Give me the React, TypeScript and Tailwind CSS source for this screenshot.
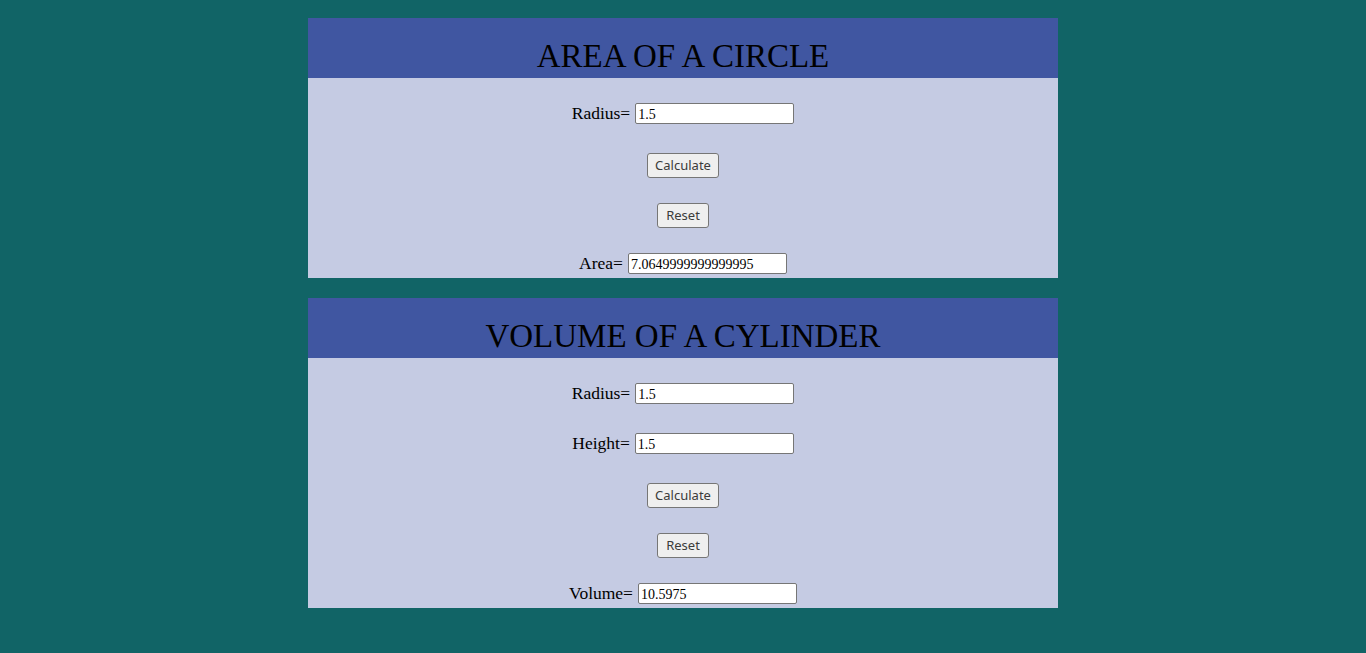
import React, { useState } from "react";

const serif = "font-['Liberation_Serif',Georgia,serif]";

function Field({ label, value, onChange }: { label: string; value: string; onChange?: (v: string) => void }) {
    return (
        <div className="h-[50px] flex justify-center items-start">
            <div className="flex items-start">
                <span className={`${serif} text-[17.5px] leading-[21px] text-black mr-[5px]`}>{label}</span>
                <input
                    value={value}
                    onChange={(e) => onChange && onChange(e.target.value)}
                    className={`${serif} text-[14px] w-[159px] h-[21px] bg-white border border-[#767676] rounded-[2px] px-[2px] pt-[1px] text-black outline-none`}
                />
            </div>
        </div>
    );
}

function Btn({ children, w, onClick }: { children: React.ReactNode; w: string; onClick?: () => void }) {
    return (
        <div className="h-[50px] flex justify-center items-start">
            <button
                onClick={onClick}
                className={`${w} h-[25px] bg-[#efefef] border border-[#767676] rounded-[3px] text-[13px] text-[#3b3b3b] font-['Noto_Sans',sans-serif] leading-none`}
            >
                {children}
            </button>
        </div>
    );
}

function Card({ title, children }: { title: string; children: React.ReactNode }) {
    return (
        <div className="w-[750px] mx-auto">
            <div className="h-[60px] bg-[#4056a1] pt-[22px]">
                <h1 className={`${serif} text-[33px] leading-[32px] text-black text-center`}>{title}</h1>
            </div>
            <div className="bg-[#c5cbe3] pt-[25px] flex flex-col">{children}</div>
        </div>
    );
}

export default function App() {
    const [r1, setR1] = useState("1.5");
    const [area, setArea] = useState("7.0649999999999995");
    const [r2, setR2] = useState("1.5");
    const [h2, setH2] = useState("1.5");
    const [vol, setVol] = useState("10.5975");

    return (
        <div className="min-h-[653px] bg-[#116466] pt-[18px] flex flex-col gap-[20px]">
            <Card title="AREA OF A CIRCLE">
                <Field label="Radius=" value={r1} onChange={setR1} />
                <Btn w="w-[72px]" onClick={() => setArea(String(3.14 * Number(r1) * Number(r1)))}>Calculate</Btn>
                <Btn w="w-[52px]" onClick={() => { setR1(""); setArea(""); }}>Reset</Btn>
                <div className="h-[25px]">
                    <Field label="Area=" value={area} />
                </div>
            </Card>
            <Card title="VOLUME OF A CYLINDER">
                <Field label="Radius=" value={r2} onChange={setR2} />
                <Field label="Height=" value={h2} onChange={setH2} />
                <Btn w="w-[72px]" onClick={() => setVol(String(3.14 * Number(r2) * Number(r2) * Number(h2)))}>Calculate</Btn>
                <Btn w="w-[52px]" onClick={() => { setR2(""); setH2(""); setVol(""); }}>Reset</Btn>
                <div className="h-[25px]">
                    <Field label="Volume=" value={vol} />
                </div>
            </Card>
        </div>
    );
}
